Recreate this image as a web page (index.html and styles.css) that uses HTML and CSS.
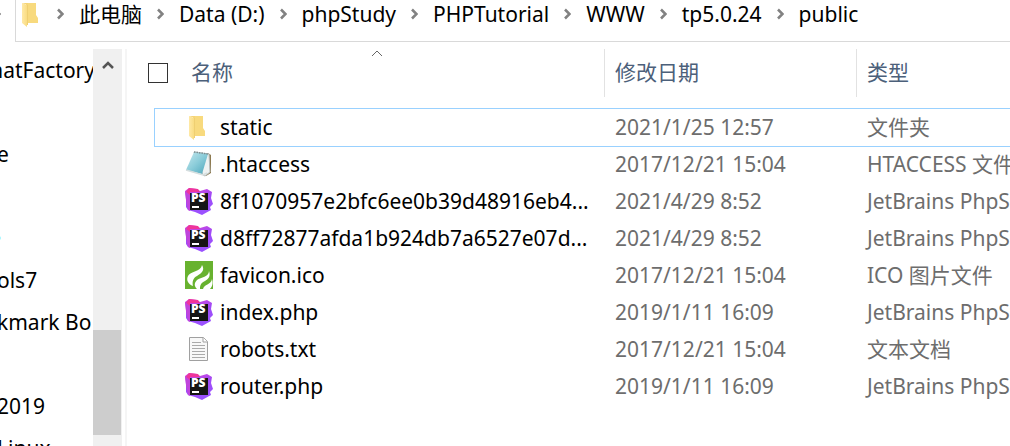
FILE: index.html
```html
<!DOCTYPE html>
<html lang="zh-CN">
<head>
<meta charset="utf-8">
<meta name="viewport" content="width=device-width, initial-scale=1">
<title>public</title>
<link rel="stylesheet" href="styles.css">
</head>
<body>
<svg class="defs" aria-hidden="true">
  <defs>
    <linearGradient id="gFolder" x1="0" x2="1"><stop offset="0" stop-color="#ffe9a6"/><stop offset="1" stop-color="#f9dc82"/></linearGradient>
    <linearGradient id="gStorm" x1="0.3" y1="0" x2="0.6" y2="1"><stop offset="0" stop-color="#d545d8"/><stop offset="0.4" stop-color="#a04af7"/><stop offset="1" stop-color="#9a52ff"/></linearGradient>
    <linearGradient id="gPad" x1="0" y1="0" x2="1" y2="1"><stop offset="0" stop-color="#c6e8ee"/><stop offset="0.5" stop-color="#8accd9"/><stop offset="1" stop-color="#4ba5ba"/></linearGradient>
    <symbol id="folder" viewBox="0 0 28 28">
      <path d="M8 3h10v12l2 3v5H8z" fill="#f8da7e"/>
      <path d="M4 3 9 5v22l-5-4z" fill="url(#gFolder)"/>
      <path d="M4 3h6v2z" fill="#f5d477"/>
      <path d="M9.500 5v20" stroke="#efcf72"/>
    </symbol>
    <symbol id="storm" viewBox="0 0 28 28">
      <path d="M0 4 4 1l8 1 3 2 7-2 5 3-1 6 2 6-3 3 1 3-9 5-7-3-7-2-2-3L1 12z" fill="url(#gStorm)"/>
      <path d="M4 1l9 1 2 3H5v5L1 5z" fill="#ef359a"/>
      <path d="M0 4 5 8v16l-2-1-2-10z" fill="#c044dc"/>
      <path d="M5 6h18v17H5z" fill="#151515"/>
      <text x="6" y="15" class="storm-text">PS</text>
      <path d="M7 19h7v2H7z" fill="#fff"/>
    </symbol>
    <symbol id="pad" viewBox="0 0 28 28">
      <path d="M23 3l3 2v18l-5 3z" fill="#8d7a50"/>
      <path d="M9 2l15 2 1 18-5 4-2-1z" fill="#eef2f2" stroke="#b5bcbc"/>
      <path d="M9 2 23 4 17 24 1 20z" fill="url(#gPad)"/>
      <path d="M1 20 18 25 22 23" fill="none" stroke="#d5dedf" stroke-width="1.500"/>
      <path d="M9 2 23 4" stroke="#7d8d90" stroke-width="1.500" stroke-dasharray="1.500 1"/>
    </symbol>
    <symbol id="flame" viewBox="0 0 28 28">
      <path d="M0 0h28v28H0z" fill="#68b22f"/>
      <path d="M17 4c3 5 0 8-5 11-4 2-5 6-4 10-5-2-7-6-5-10 2-5 13-4 14-11z" fill="#fff"/>
      <path d="M24 10c2 6-1 8-4 10-4 2-5 4-5 8h-3c-3-3-3-6 0-9 4-3 12-3 12-9z" fill="#fff"/>
      <path d="M27 18c1 3 1 7-2 10h-7c1-5 8-4 9-10z" fill="#fff"/>
    </symbol>
    <symbol id="doc" viewBox="0 0 28 28">
      <path d="M4.500 2.500h14l4 4v19h-18z" fill="#f8f8f8" stroke="#a0a0a0"/>
      <path d="M18 2.500v4.500h4.500" fill="#fff" stroke="#a0a0a0"/>
      <path d="M7 7.500h9M7 10.500h13M7 13.500h13M7 16.500h13M7 19.500h13M7 22.500h13" stroke="#aaa"/>
    </symbol>
    <symbol id="next" viewBox="0 0 7 12"><path d="M1 1.500 5.500 6 1 10.500" fill="none" stroke="#828282" stroke-width="2.600"/></symbol>
  </defs>
</svg>

<header class="topbar">
  <svg class="sep sep-first" aria-hidden="true"><use href="#next"/></svg>
  <nav class="address" aria-label="路径">
    <svg class="icon" aria-hidden="true"><use href="#folder"/></svg>
    <svg class="sep" aria-hidden="true"><use href="#next"/></svg>
    <a href="#">此电脑</a>
    <svg class="sep" aria-hidden="true"><use href="#next"/></svg>
    <a href="#">Data (D:)</a>
    <svg class="sep" aria-hidden="true"><use href="#next"/></svg>
    <a href="#">phpStudy</a>
    <svg class="sep" aria-hidden="true"><use href="#next"/></svg>
    <a href="#">PHPTutorial</a>
    <svg class="sep" aria-hidden="true"><use href="#next"/></svg>
    <a href="#">WWW</a>
    <svg class="sep" aria-hidden="true"><use href="#next"/></svg>
    <a href="#">tp5.0.24</a>
    <svg class="sep" aria-hidden="true"><use href="#next"/></svg>
    <a href="#">public</a>
  </nav>
</header>

<div class="body">
  <nav class="tree" aria-label="导航">
    <a href="#" class="long">matFactory</a>
    <span></span>
    <a href="#">e</a>
    <span></span>
    <span class="dot-row"><i class="dot"></i></span>
    <a href="#">ols7</a>
    <a href="#">kmark Bo</a>
    <span></span>
    <a href="#">2019</a>
    <a href="#">Linux</a>
  </nav>
  <div class="scrollbar">
    <button type="button" class="up" aria-label="向上滚动"><svg viewBox="0 0 12 10" width="12" height="10"><path d="M1 8 6 3l5 5" fill="none" stroke="#555" stroke-width="2.500"/></svg></button>
    <div class="track"></div>
    <div class="thumb"></div>
  </div>
  <main class="files">
    <table>
      <thead>
        <tr>
          <th class="name"><input type="checkbox" aria-label="全选"><span>名称</span>
            <svg class="sort" viewBox="0 0 12 7" aria-hidden="true"><path d="M1 6 6 1l5 5" fill="none" stroke="#666"/></svg></th>
          <th><span>修改日期</span></th>
          <th><span>类型</span></th>
        </tr>
      </thead>
      <tbody>
        <tr class="current"><td class="name"><svg class="icon" aria-hidden="true"><use href="#folder"/></svg><span>static</span></td><td>2021/1/25 12:57</td><td>文件夹</td></tr>
        <tr><td class="name"><svg class="icon" aria-hidden="true"><use href="#pad"/></svg><span>.htaccess</span></td><td>2017/12/21 15:04</td><td>HTACCESS 文件</td></tr>
        <tr><td class="name"><svg class="icon" aria-hidden="true"><use href="#storm"/></svg><span>8f1070957e2bfc6ee0b39d48916eb4...</span></td><td>2021/4/29 8:52</td><td>JetBrains PhpStorm</td></tr>
        <tr><td class="name"><svg class="icon" aria-hidden="true"><use href="#storm"/></svg><span>d8ff72877afda1b924db7a6527e07d...</span></td><td>2021/4/29 8:52</td><td>JetBrains PhpStorm</td></tr>
        <tr><td class="name"><svg class="icon" aria-hidden="true"><use href="#flame"/></svg><span>favicon.ico</span></td><td>2017/12/21 15:04</td><td>ICO 图片文件</td></tr>
        <tr><td class="name"><svg class="icon" aria-hidden="true"><use href="#storm"/></svg><span>index.php</span></td><td>2019/1/11 16:09</td><td>JetBrains PhpStorm</td></tr>
        <tr><td class="name"><svg class="icon" aria-hidden="true"><use href="#doc"/></svg><span>robots.txt</span></td><td>2017/12/21 15:04</td><td>文本文档</td></tr>
        <tr><td class="name"><svg class="icon" aria-hidden="true"><use href="#storm"/></svg><span>router.php</span></td><td>2019/1/11 16:09</td><td>JetBrains PhpStorm</td></tr>
      </tbody>
    </table>
  </main>
</div>
</body>
</html>
```

FILE: styles.css
```css
* { box-sizing: border-box; }

body {
  margin: 0;
  height: 100vh;
  display: flex;
  flex-direction: column;
  overflow: hidden;
  background: #fff;
  color: #000;
  font: 21px/28px "Noto Sans", "Noto Sans CJK SC", sans-serif;
  white-space: nowrap;
}

a { color: inherit; text-decoration: none; }

.defs { position: absolute; width: 0; height: 0; }
.icon { width: 28px; height: 28px; flex: none; }
.sep { width: 7px; height: 12px; flex: none; }
.storm-text { font: 800 12px "Open Sans", sans-serif; fill: #fff; }

/* Address bar */
.topbar { display: flex; flex: none; margin-bottom: 7px; }
.sep-first { margin: 8px 14px 0 -6px; }
.address {
  flex: 1;
  display: flex;
  align-items: center;
  gap: 15px;
  min-width: 0;
  padding-bottom: 13px;
  border-left: 1px solid #d9d9d9;
  border-bottom: 1px solid #d9d9d9;
}
.address .icon { margin-left: 2px; margin-right: -4px; }

/* Lower area */
.body { flex: 1; display: flex; min-height: 0; }

.tree {
  width: 93px;
  flex: none;
  overflow: hidden;
  display: flex;
  flex-direction: column;
}
.tree > * {
  flex: none;
  display: flex;
  align-items: center;
  height: 42px;
  margin-left: -3px;
}
.tree .long { justify-content: flex-end; margin-right: -2px; }
.dot { width: 4px; height: 4px; background: #a5f8ff; border-radius: 0 2px 2px 0; }

.scrollbar {
  width: 29px;
  flex: none;
  display: flex;
  flex-direction: column;
  padding-bottom: 11px;
  background: #f0f0f0;
}
.up {
  display: flex;
  justify-content: center;
  align-items: center;
  height: 32px;
  padding: 0;
  border: 0;
  background: none;
}
.track { flex: 1; }
.thumb { height: 105px; margin-right: 1px; background: #cdcdcd; }

/* File list */
.files {
  flex: 1;
  min-width: 0;
  margin-left: 3px;
  border-left: 2px solid #f5f5f5;
}
table, thead, tbody { display: block; }
tr {
  display: grid;
  grid-template-columns: minmax(0, 1fr) 252px 154px;
}
th, td {
  display: flex;
  align-items: center;
  min-width: 0;
  overflow: hidden;
  font-weight: 400;
  text-align: left;
}

thead { margin-bottom: 11px; }
th {
  height: 48px;
  padding: 0 0 0 10px;
  color: #4c607a;
  border-left: 1px solid #e2e2e2;
}
th span { padding-bottom: 2px; }
th.name {
  position: relative;
  gap: 23px;
  padding-left: 21px;
  border-left: 0;
}
th input {
  appearance: none;
  width: 20px;
  height: 20px;
  margin: 0;
  border: 1px solid #333;
  background: #fff;
}
.sort { position: absolute; top: 1px; left: calc(50% + 5px); width: 12px; height: 7px; }

tbody tr { height: 37px; margin-left: 27px; }
tbody .current {
  height: 39px;
  border: 1px solid #99d1ff;
  border-right: 0;
}
td { padding: 0 0 4px 11px; color: #6d6d6d; }
.current td { padding-bottom: 2px; }
td.name { gap: 7px; padding-left: 31px; color: #000; }
.current td.name { padding-left: 30px; }
```
